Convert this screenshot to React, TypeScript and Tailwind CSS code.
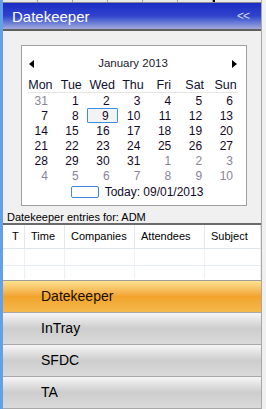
import React from 'react';

// Datekeeper side panel: calendar, entries grid and the outlook-style nav buttons.
const days = ['Mon', 'Tue', 'Wed', 'Thu', 'Fri', 'Sat', 'Sun'];

type Cell = { n: number; other?: boolean; selected?: boolean };

const weeks: Cell[][] = [
  [{ n: 31, other: true }, { n: 1 }, { n: 2 }, { n: 3 }, { n: 4 }, { n: 5 }, { n: 6 }],
  [{ n: 7 }, { n: 8 }, { n: 9, selected: true }, { n: 10 }, { n: 11 }, { n: 12 }, { n: 13 }],
  [{ n: 14 }, { n: 15 }, { n: 16 }, { n: 17 }, { n: 18 }, { n: 19 }, { n: 20 }],
  [{ n: 21 }, { n: 22 }, { n: 23 }, { n: 24 }, { n: 25 }, { n: 26 }, { n: 27 }],
  [{ n: 28 }, { n: 29 }, { n: 30 }, { n: 31 }, { n: 1, other: true }, { n: 2, other: true }, { n: 3, other: true }],
  [4, 5, 6, 7, 8, 9, 10].map((n) => ({ n, other: true })),
];

const columns = [
  { label: 'T', w: 'w-[22px]', pl: 'pl-[9px]' },
  { label: 'Time', w: 'w-[40px]', pl: 'pl-[6px]' },
  { label: 'Companies', w: 'w-[70px]', pl: 'pl-[6px]' },
  { label: 'Attendees', w: 'w-[70px]', pl: 'pl-[6px]' },
  { label: 'Subject', w: 'flex-1', pl: 'pl-[6px]' },
];

const navItems = ['Datekeeper', 'InTray', 'SFDC', 'TA'];

function Calendar() {
  return (
    <div className="w-[226px] h-[161px] bg-white border border-[#a0a0a0] flex flex-col text-[12px]">
      <div className="h-[33px] flex items-center px-[6px] pt-[2px]">
        <svg width="5" height="8" viewBox="0 0 5 8" className="ml-[1px]">
          <path d="M5 0 L0 4 L5 8 Z" fill="#000" />
        </svg>
        <div className="flex-1 text-center text-[11.5px] text-[#1a1a2a]">January 2013</div>
        <svg width="5" height="8" viewBox="0 0 5 8" className="mr-[3px]">
          <path d="M0 0 L5 4 L0 8 Z" fill="#000" />
        </svg>
      </div>
      <div className="ml-[3px] w-[216px]">
        <div className="grid grid-cols-7 h-[13px] items-center">
          {days.map((d) => (
            <div key={d} className="text-center leading-none text-[12.5px] text-[#101030]">
              {d}
            </div>
          ))}
        </div>
        <div className="h-[1px] bg-[#e6e6e6] mx-[3px]" />
        <div>
          {weeks.map((w, i) => (
            <div key={i} className="grid grid-cols-7 h-[15px]">
              {w.map((c, j) => (
                <div
                  key={j}
                  className={
                    'flex items-center justify-end pr-[8px] leading-none ' +
                    (c.other ? 'text-[#8a8494] ' : 'text-[#140a28] ') +
                    (c.selected ? 'border border-[#3c8ee0] bg-[#f3f3f3] rounded-[1px] pr-[7px]' : '')
                  }
                >
                  {c.n}
                </div>
              ))}
            </div>
          ))}
        </div>
      </div>
      <div className="flex items-center justify-center mt-[3px] pl-[6px]">
        <div className="w-[28px] h-[12px] border border-[#3e86d6] rounded-[2px]" />
        <span className="ml-[6px] text-[12px] text-[#140a28] leading-none">Today: 09/01/2013</span>
      </div>
    </div>
  );
}

export default function App() {
  return (
    <div
      className="w-[266px] h-[409px] flex bg-[#f0f0f0] overflow-hidden"
      style={{ fontFamily: '"Liberation Sans", Arial, sans-serif' }}
    >
      <div className="w-[3px] h-full bg-[#62a0ea]" />
      <div className="w-[259px] h-full flex flex-col border-r border-[#a6a6a6]">
        <div className="h-[3px] flex border-b border-[#8a8a8a]">
          {[0, 1, 2, 3, 4, 5].map((i) => (
            <div key={i} className="w-[35px] bg-[#e8e8e8] border-r border-[#a0a0a0]" />
          ))}
          <div className="w-[2px] bg-black" />
          <div className="flex-1 bg-[#e8e8e8]" />
        </div>
        <div className="h-[26px] flex items-center justify-between pl-[9px] pr-[8px] bg-gradient-to-b from-[#1b2cc6] via-[#3142cc] to-[#a4a9da]">
          <span className="text-white text-[15px] leading-none pt-[1px]">Datekeeper</span>
          <span className="text-[#d4d8f6] text-[12px] leading-none mr-[4px] tracking-[-1px]">&lt;&lt;</span>
        </div>
        <div className="h-[2px] bg-[#5f5f5f]" />
        <div className="h-[192px] flex flex-col">
          <div className="pl-[18px] pt-[14px]">
            <Calendar />
          </div>
          <div className="pl-[4px] pt-[6px] text-[11px] text-black leading-none">Datekeeper entries for: ADM</div>
        </div>
        <div className="h-[2px] bg-[#6b6b6b]" />
        <div className="h-[55px] bg-white flex flex-col">
          <div className="h-[24px] flex border-b border-[#dfe5ee]">
            {columns.map((c) => (
              <div
                key={c.label}
                className={c.w + ' ' + c.pl + ' flex items-center border-r border-[#e3e8f0] text-[11px] text-black'}
              >
                {c.label}
              </div>
            ))}
          </div>
          {[17, 14].map((h, r) => (
            <div key={r} className={(h === 17 ? 'h-[17px] border-b border-[#e6ebf2] ' : 'h-[13px] ') + 'flex'}>
              {columns.map((c) => (
                <div key={c.label} className={c.w + ' border-r border-[#edf1f6]'} />
              ))}
            </div>
          ))}
        </div>
        <div className="flex flex-col border-t border-[#9c9c9c]">
          {navItems.map((item, i) => (
            <div
              key={item}
              className={
                'h-[32px] flex items-center pl-[38px] text-[14px] border-b border-[#a8a8a8] ' +
                (i === 0
                  ? 'bg-gradient-to-b from-[#fde190] via-[#f1a42a] to-[#f5b84c] text-[#1a0e00]'
                  : 'bg-gradient-to-b from-[#f6f6f6] via-[#cdcdcd] to-[#dadada] text-black')
              }
            >
              {item}
            </div>
          ))}
        </div>
      </div>
      <div className="flex-1 bg-[#f0f0f0]" />
    </div>
  );
}
